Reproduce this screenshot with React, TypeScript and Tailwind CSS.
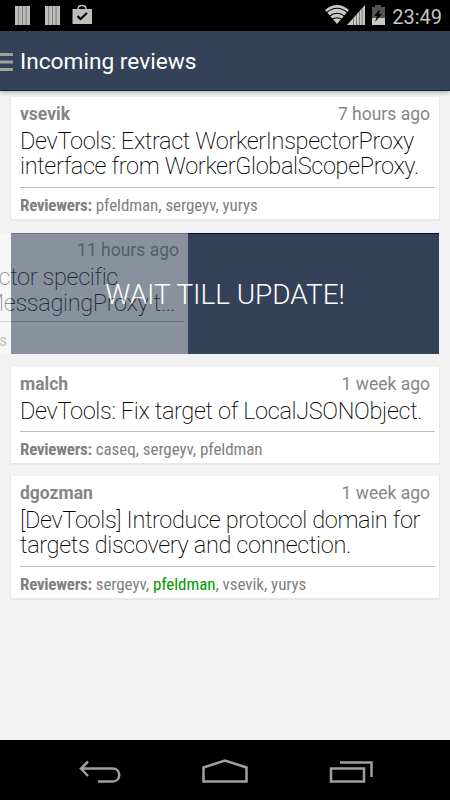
import React from 'react';

interface IReview {
    author: string;
    time: string;
    title: string[];
    reviewers: string[];
    className: string;
}

const CURRENT_USER = 'pfeldman';

const incoming: IReview = {
    author: 'vsevik',
    time: '7 hours ago',
    title: ['DevTools: Extract WorkerInspectorProxy', 'interface from WorkerGlobalScopeProxy.'],
    reviewers: ['pfeldman,', 'sergeyv,', 'yurys'],
    className: 'h-[122px]',
};

const rest: IReview[] = [
    {
        author: 'malch',
        time: '1 week ago',
        title: ['DevTools: Fix target of LocalJSONObject.'],
        reviewers: ['caseq,', 'sergeyv,', 'pfeldman'],
        className: 'mt-[13px] h-[96px]',
    },
    {
        author: 'dgozman',
        time: '1 week ago',
        title: ['[DevTools] Introduce protocol domain for', 'targets discovery and connection.'],
        reviewers: ['sergeyv,', '*pfeldman', 'vsevik,', 'yurys'],
        className: 'mt-[13px] h-[122px]',
    },
];

const Reviewer: React.FC<{ name: string }> = ({ name }) =>
    name === `*${CURRENT_USER}` ? (
        <>
            <span className="text-[#009a00]">{CURRENT_USER}</span>,{' '}
        </>
    ) : (
        <>{name} </>
    );

const ReviewCard: React.FC<{ review: IReview }> = ({ review }) => (
    <article
        className={`mx-[11px] flex shrink-0 flex-col bg-white pl-[9px] shadow-[0_1px_0_1px_#e8e8e8] ${review.className}`}
    >
        <div className="flex h-[32px] items-center justify-between pt-[3px] pr-[9px] text-[17.5px] text-[#868686]">
            <span className="font-bold">{review.author}</span>
            <span>{review.time}</span>
        </div>
        <h2 className="text-[23.5px] leading-[25px] font-extralight tracking-[-0.35px] whitespace-nowrap text-black">
            {review.title.map((line) => (
                <span key={line} className="block">
                    {line}
                </span>
            ))}
        </h2>
        <div className="mt-auto mr-[4px] h-px shrink-0 bg-[#bdbdbd]" />
        <p className="mt-[6px] mb-[3px] font-['Roboto_Condensed',Roboto,sans-serif] text-[17px] leading-[22px] tracking-[-0.06px] whitespace-nowrap text-[#808080] [font-stretch:75%]">
            <b className="tracking-[-0.25px]">Reviewers:</b>{' '}
            {review.reviewers.map((name) => (
                <Reviewer key={name} name={name} />
            ))}
        </p>
    </article>
);

const SwipedCard: React.FC = () => (
    <article className="relative mx-[11px] mt-[14px] flex h-[121px] shrink-0 items-center justify-center border-t border-[#06084a] bg-[#334259]">
        <span className="pt-[2px] text-[28px] font-light tracking-[-0.05px] whitespace-nowrap text-white">
            WAIT TILL UPDATE!
        </span>
        {/* Card being dragged off to the left */}
        <div className="absolute -top-px -left-[251px] h-[121px] w-[428px] bg-white text-right opacity-[0.42]">
            <div className="flex h-[32px] items-center justify-end pt-[3px] pr-[9px] text-[17.5px] text-[#868686]">
                11 hours ago
            </div>
            <div className="-mt-px text-[23.5px] leading-[26px] font-extralight tracking-[-0.35px] whitespace-nowrap text-black">
                <div className="pr-[70px]">ctor specific</div>
                <div className="pr-[13px]">MessagingProxy t…</div>
            </div>
            <div className="mt-[5px] mr-[4px] h-px bg-[#aaa]" />
            <div className="mt-[7px] pr-[181px] font-['Roboto_Condensed',Roboto,sans-serif] text-[17px] leading-[22px] text-[#808080] [font-stretch:75%]">
                s
            </div>
        </div>
    </article>
);

const StripesIcon: React.FC = () => (
    <svg width="15" height="19" viewBox="0 0 15 19" fill="#bebebe">
        <path d="M0 0h15v19H0z" fill="#777" />
        <path d="M0 0h3.3v19H0zM4.2 0h2.9v19H4.2zM8 0h2.6v19H8zM11.6 0H15v19h-3.4z" />
    </svg>
);

const StatusBar: React.FC = () => (
    <header className="flex h-[31px] shrink-0 items-start bg-black pl-[15px]">
        <div className="flex pt-[6px]">
            <StripesIcon />
            <span className="w-[15px]" />
            <StripesIcon />
        </div>
        <svg className="mt-[4px] ml-[12px]" width="21" height="21" viewBox="0 0 21 21" fill="none">
            <path d="M6 6V5q0-3.500 4-3.500T14 5v1" stroke="#bebebe" strokeWidth="1.5" />
            <path d="M.5 5H20v15H.5z" fill="#bebebe" />
            <path d="m5.500 12 3 3 6.500-6" stroke="#000" strokeWidth="2.2" />
        </svg>
        <svg className="mt-[4px] ml-auto" width="61" height="22" viewBox="0 0 61 22">
            <path d="M0 6Q12-4 24 6L12 20z" fill="#c8c8c8" />
            <path d="M1 9Q12-.5 23 9M4 12.500q8-6.500 16 0M6.500 15.800q5.500-4.200 11 0" fill="none" stroke="#000" strokeWidth="1.1" />
            <path d="M22 21 40 1v20z" fill="#c8c8c8" />
            <path d="M28.500 14v7M31.500 10.500v10.500M34.500 7.500V21M37.200 4v17" stroke="#777" strokeWidth="1" />
            <path d="M47 3h3V1h6v2h4v11H47z" fill="#555" />
            <path d="M47 14h13v7H47z" fill="#c8c8c8" />
            <path d="m54 6-5 6h3l-2 6 7-8h-3l1-4z" fill="#080808" />
        </svg>
        <span className="mt-[4px] mr-[8px] ml-[6px] text-[20px] leading-[26px] text-[#c4c4c4]">23:49</span>
    </header>
);

const TitleBar: React.FC = () => (
    <div className="z-10 flex h-[60px] shrink-0 items-center border-b border-[#06294d] bg-[#334259] shadow-[0_1px_5px_rgba(0,0,0,0.35)]">
        <svg className="mt-[3px]" width="13" height="19" viewBox="0 0 13 19" fill="#a0a09c">
            <path d="M0 0h13v3H0zM0 7.500h13v3H0zM0 15h13v3H0z" />
        </svg>
        <h1 className="mt-[4px] ml-[7px] text-[22.7px] text-white">Incoming reviews</h1>
    </div>
);

const NavBar: React.FC = () => (
    <nav className="flex h-[60px] shrink-0 bg-black">
        <svg width="450" height="60" viewBox="0 0 450 60" fill="none" stroke="#a0a0a0" strokeWidth="2.5">
            <path d="M80.500 28.500h32c9 0 9 13 0 13H98M88 21.500l-7 7 7 7.500" />
            <path d="M203.500 41.500v-14L225 20.500l21.500 7v14z" />
            <path d="M331 28.500h33v13h-33zM340 22.500h31.500V37" />
        </svg>
    </nav>
);

const App: React.FC = () => (
    <div className="flex h-[800px] w-[450px] flex-col overflow-hidden bg-[#f2f2f2] font-[Roboto,sans-serif]">
        <StatusBar />
        <TitleBar />
        <main className="flex flex-1 flex-col pt-[6px]">
            <ReviewCard review={incoming} />
            <SwipedCard />
            {rest.map((review) => (
                <ReviewCard key={review.author} review={review} />
            ))}
        </main>
        <NavBar />
    </div>
);

export default App;
